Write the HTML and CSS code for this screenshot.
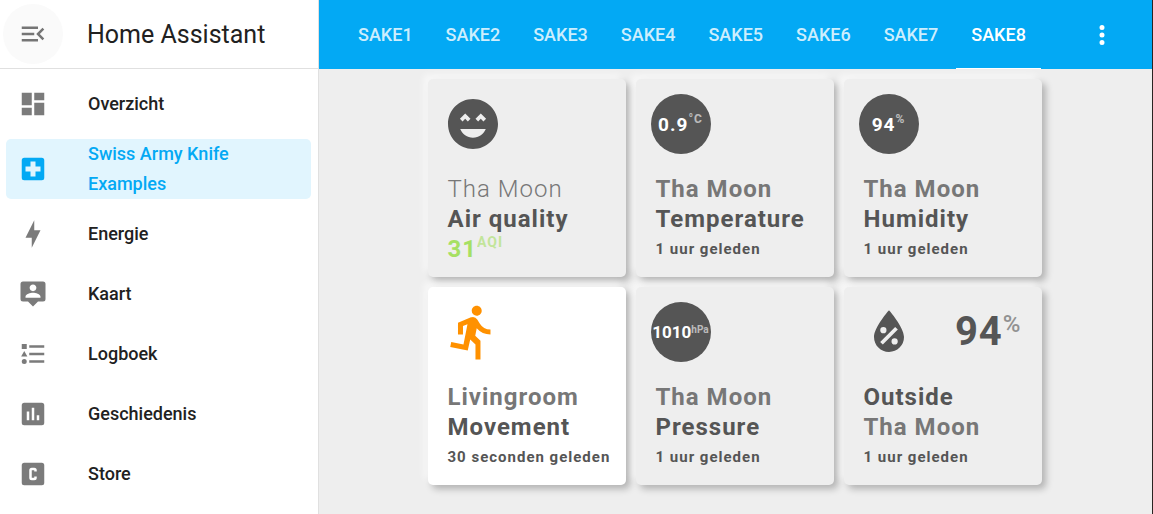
FILE: index.html
```
<!DOCTYPE html>
<html lang="nl">
<head>
<meta charset="utf-8">
<title>Home Assistant</title>
<link rel="stylesheet" href="styles.css">
</head>
<body>
<div class="app">
  <aside class="sidebar">
    <header class="sidebar-header">
      <button class="menu-toggle" type="button" aria-label="Zijbalk">
        <svg class="icon" viewBox="0 0 24 24"><path d="M21,15.61L19.59,17L14.58,12L19.59,7L21,8.39L17.44,12L21,15.61M3,6H16V8H3V6M3,13V11H13V13H3M3,18V16H16V18H3Z"/></svg>
      </button>
      <h1 class="brand">Home Assistant</h1>
    </header>
    <nav class="menu">
      <a class="menu-item" href="#overzicht"><svg class="icon" viewBox="0 0 24 24"><path d="M13,3V9H21V3M13,21H21V11H13M3,21H11V15H3M3,13H11V3H3V13Z"/></svg><span class="menu-label">Overzicht</span></a>
      <a class="menu-item selected" href="#sake" aria-current="page"><svg class="icon" viewBox="0 0 24 24"><path d="M18,14H14V18H10V14H6V10H10V6H14V10H18M19,3H5A2,2 0 0,0 3,5V19A2,2 0 0,0 5,21H19A2,2 0 0,0 21,19V5A2,2 0 0,0 19,3Z"/></svg><span class="menu-label">Swiss Army Knife Examples</span></a>
      <a class="menu-item" href="#energie"><svg class="icon" viewBox="0 0 24 24"><path d="M11,15H6L13,1V9H18L11,23V15Z"/></svg><span class="menu-label">Energie</span></a>
      <a class="menu-item" href="#kaart"><svg class="icon" viewBox="0 0 24 24"><path d="M20,2H4A2,2 0 0,0 2,4V16A2,2 0 0,0 4,18H8L12,22L16,18H20A2,2 0 0,0 22,16V4A2,2 0 0,0 20,2M12,4.3C13.5,4.3 14.7,5.5 14.7,7S13.5,9.7 12,9.7S9.3,8.5 9.3,7S10.5,4.3 12,4.3M18,15H6V14.1C6,12.1 10,11 12,11S18,12.1 18,14.1V15Z"/></svg><span class="menu-label">Kaart</span></a>
      <a class="menu-item" href="#logboek"><svg class="icon" viewBox="0 0 24 24"><path d="M5,9.5L7.5,14H2.5L5,9.5M3,4H7V8H3V4M5,20A2,2 0 0,0 7,18A2,2 0 0,0 5,16A2,2 0 0,0 3,18A2,2 0 0,0 5,20M9,5V7H21V5H9M9,19H21V17H9V19M9,13H21V11H9V13Z"/></svg><span class="menu-label">Logboek</span></a>
      <a class="menu-item" href="#geschiedenis"><svg class="icon" viewBox="0 0 24 24"><path d="M9,17H7V10H9V17M13,17H11V7H13V17M17,17H15V13H17V17M19,3H5A2,2 0 0,0 3,5V19A2,2 0 0,0 5,21H19A2,2 0 0,0 21,19V5A2,2 0 0,0 19,3Z"/></svg><span class="menu-label">Geschiedenis</span></a>
      <a class="menu-item" href="#store"><svg class="icon" viewBox="0 0 24 24"><path d="M5,3H19A2,2 0 0,1 21,5V19A2,2 0 0,1 19,21H5A2,2 0 0,1 3,19V5A2,2 0 0,1 5,3M11,7A2,2 0 0,0 9,9V15A2,2 0 0,0 11,17H13A2,2 0 0,0 15,15V14H13V15H11V9H13V10H15V9A2,2 0 0,0 13,7H11Z"/></svg><span class="menu-label">Store</span></a>
    </nav>
  </aside>
  <div class="panel">
    <header class="toolbar">
      <nav class="tabs">
        <a class="tab" href="#sake1">SAKE1</a>
        <a class="tab" href="#sake2">SAKE2</a>
        <a class="tab" href="#sake3">SAKE3</a>
        <a class="tab" href="#sake4">SAKE4</a>
        <a class="tab" href="#sake5">SAKE5</a>
        <a class="tab" href="#sake6">SAKE6</a>
        <a class="tab" href="#sake7">SAKE7</a>
        <a class="tab active" href="#sake8" aria-current="page">SAKE8</a>
      </nav>
      <button class="overflow" type="button" aria-label="Menu">
        <svg class="icon" viewBox="0 0 24 24"><path d="M12,16A2,2 0 0,1 14,18A2,2 0 0,1 12,20A2,2 0 0,1 10,18A2,2 0 0,1 12,16M12,10A2,2 0 0,1 14,12A2,2 0 0,1 12,14A2,2 0 0,1 10,12A2,2 0 0,1 12,10M12,4A2,2 0 0,1 14,6A2,2 0 0,1 12,8A2,2 0 0,1 10,6A2,2 0 0,1 12,4Z"/></svg>
      </button>
    </header>
    <main class="cards">
      <article class="card">
        <div class="card-head"><svg class="card-icon" viewBox="0 0 24 24"><path d="M12,2C6.47,2 2,6.47 2,12C2,17.5 6.47,22 12,22C17.5,22 22,17.53 22,12C22,6.47 17.5,2 12,2M8.88,7.82L11,9.94L9.94,11L8.88,9.94L7.82,11L6.76,9.94L8.88,7.82M12,17.5C9.67,17.5 7.69,16.04 6.89,14H17.11C16.31,16.04 14.33,17.5 12,17.5M16.18,11L15.12,9.94L14.06,11L13,9.94L15.12,7.82L17.24,9.94L16.18,11Z"/></svg></div>
        <div class="card-text">
          <p class="line muted thin">Tha Moon</p>
          <p class="line">Air quality</p>
          <p class="line aqi">31<span class="unit">AQI</span></p>
        </div>
      </article>
      <article class="card">
        <div class="card-head"><div class="badge">0.9<span class="unit">°C</span></div></div>
        <div class="card-text">
          <p class="line muted">Tha Moon</p>
          <p class="line">Temperature</p>
          <p class="line ago">1 uur geleden</p>
        </div>
      </article>
      <article class="card">
        <div class="card-head"><div class="badge">94<span class="unit">%</span></div></div>
        <div class="card-text">
          <p class="line muted">Tha Moon</p>
          <p class="line">Humidity</p>
          <p class="line ago">1 uur geleden</p>
        </div>
      </article>
      <article class="card on">
        <div class="card-head"><svg class="card-icon" viewBox="0 0 24 24"><path d="M13.49,5.48C14.59,5.48 15.49,4.58 15.49,3.48C15.49,2.38 14.59,1.48 13.49,1.48C12.39,1.48 11.49,2.38 11.49,3.48A2,2 0 0,0 13.49,5.48M9.89,19.38L10.89,14.98L12.99,16.98V22.98H14.99V15.48L12.89,13.48L13.49,10.48A7.3,7.3 0 0,0 18.99,12.98V10.98A5,5 0 0,1 14.69,8.58L13.69,6.98A2.08,2.08 0 0,0 11.99,5.98C11.69,5.98 11.49,6.08 11.19,6.08L5.99,8.28V12.98H7.99V9.58L9.79,8.88L8.19,16.98L3.29,15.98L2.89,17.98L9.89,19.38Z"/></svg></div>
        <div class="card-text">
          <p class="line muted">Livingroom</p>
          <p class="line">Movement</p>
          <p class="line ago">30 seconden geleden</p>
        </div>
      </article>
      <article class="card">
        <div class="card-head"><div class="badge small">1010<span class="unit">hPa</span></div></div>
        <div class="card-text">
          <p class="line muted">Tha Moon</p>
          <p class="line">Pressure</p>
          <p class="line ago">1 uur geleden</p>
        </div>
      </article>
      <article class="card">
        <div class="card-head"><svg class="card-icon" viewBox="0 0 24 24"><path d="M12,3.25C12,3.25 6,10 6,14C6,17.32 8.69,20 12,20A6,6 0 0,0 18,14C18,10 12,3.25 12,3.25M14.47,9.97L15.53,11.03L9.53,17.03L8.47,15.97M9.75,10A1.25,1.25 0 0,1 11,11.25A1.25,1.25 0 0,1 9.75,12.5A1.25,1.25 0 0,1 8.5,11.25A1.25,1.25 0 0,1 9.75,10M14.25,14.5A1.25,1.25 0 0,1 15.5,15.75A1.25,1.25 0 0,1 14.25,17A1.25,1.25 0 0,1 13,15.75A1.25,1.25 0 0,1 14.25,14.5Z"/></svg><div class="value">94<span class="unit">%</span></div></div>
        <div class="card-text">
          <p class="line">Outside</p>
          <p class="line muted">Tha Moon</p>
          <p class="line ago">1 uur geleden</p>
        </div>
      </article>
    </main>
  </div>
</div>
</body>
</html>
```

FILE: styles.css
```
* {
  box-sizing: border-box;
}

body {
  margin: 0;
  background: #eeeeee;
  color: #212121;
  font-family: Roboto, "Noto Sans", sans-serif;
}

h1,
p {
  margin: 0;
}

button {
  border: 0;
  padding: 0;
  font: inherit;
}

a {
  color: inherit;
  text-decoration: none;
}

.app {
  display: flex;
  min-height: 100vh;
  border-right: 1px solid #2b2422;
}

.icon {
  display: block;
  flex: none;
  width: 30px;
  height: 30px;
  fill: currentColor;
  fill-rule: evenodd;
}

/* Sidebar */

.sidebar {
  flex: none;
  width: 319px;
  background: #ffffff;
  border-right: 1px solid #e0e0e0;
}

.sidebar-header {
  display: flex;
  align-items: center;
  gap: 24px;
  height: 69px;
  padding-left: 3px;
  border-bottom: 1px solid #e0e0e0;
}

.menu-toggle {
  display: grid;
  place-items: center;
  width: 60px;
  height: 60px;
  border-radius: 50%;
  background: #fafafa;
  color: #757575;
}

.brand {
  font-size: 25px;
  font-weight: 400;
}

.menu {
  display: flex;
  flex-direction: column;
  gap: 10px;
  padding: 10px 7px 10px 6px;
}

.menu-item {
  display: flex;
  align-items: center;
  gap: 40px;
  min-height: 50px;
  padding-left: 12px;
  border-radius: 5px;
  font-size: 18px;
  font-weight: 500;
  line-height: 30px;
}

.menu-item .icon {
  color: #7b7b7b;
}

.menu-label {
  max-width: 180px;
}

.selected {
  background: #e1f5fe;
  color: #03a9f4;
}

.selected .icon {
  color: #03a9f4;
}

/* Toolbar */

.panel {
  flex: 1;
  min-width: 0;
}

.toolbar {
  display: flex;
  justify-content: space-between;
  height: 69px;
  padding: 0 20px 0 24px;
  background: #03a9f4;
  color: #ffffff;
}

.tabs {
  display: flex;
  gap: 3px;
}

.tab {
  padding: 0 15px;
  border-bottom: 1px solid transparent;
  color: #cdeefd;
  font-size: 18px;
  font-weight: 500;
  line-height: 69px;
}

.tab.active {
  border-color: #ffffff;
  color: #ffffff;
}

.overflow {
  display: grid;
  place-items: center;
  width: 60px;
  background: none;
  color: inherit;
}

/* Cards */

.cards {
  display: grid;
  grid-template-columns: repeat(3, 198px);
  gap: 10px;
  justify-content: center;
  padding: 10px 2px 10px 0;
}

.card {
  padding: 15px 15px 13px;
  border-radius: 5px;
  background: #eeeeee;
  box-shadow: -5px -5px 6px rgba(255, 255, 255, 0.5), 4px 4px 7px rgba(0, 0, 0, 0.25);
  color: #555555;
  font-weight: 700;
  letter-spacing: 1px;
}

.card.on {
  background: #ffffff;
}

.card-head {
  display: flex;
  align-items: center;
  justify-content: space-between;
  height: 60px;
  margin-bottom: 20px;
}

.card-icon {
  width: 60px;
  height: 60px;
  fill: #555555;
  fill-rule: evenodd;
}

.on .card-icon {
  fill: #ff9100;
}

.badge {
  display: flex;
  align-items: center;
  justify-content: center;
  width: 60px;
  height: 60px;
  border-radius: 50%;
  background: #555555;
  color: #ffffff;
  font-size: 19px;
}

.unit {
  align-self: flex-start;
  opacity: 0.6;
}

.badge .unit {
  align-self: center;
  padding-bottom: 10px;
  font-size: 12px;
}

.badge.small {
  font-size: 17px;
  letter-spacing: 0;
}

.badge.small .unit {
  padding-bottom: 6px;
  font-size: 10px;
}

.value {
  display: flex;
  padding-right: 5px;
  font-size: 40px;
  line-height: 60px;
}

.value .unit {
  font-size: 24px;
  font-weight: 500;
  line-height: 44px;
}

.card-text {
  padding-left: 5px;
}

.line {
  font-size: 24px;
  line-height: 30px;
  white-space: nowrap;
}

.muted {
  color: #777777;
}

.thin {
  font-weight: 300;
}

.ago {
  font-size: 15px;
}

.aqi {
  display: flex;
  color: #a6e063;
}

.aqi .unit {
  font-size: 14px;
  line-height: 16px;
}
```
